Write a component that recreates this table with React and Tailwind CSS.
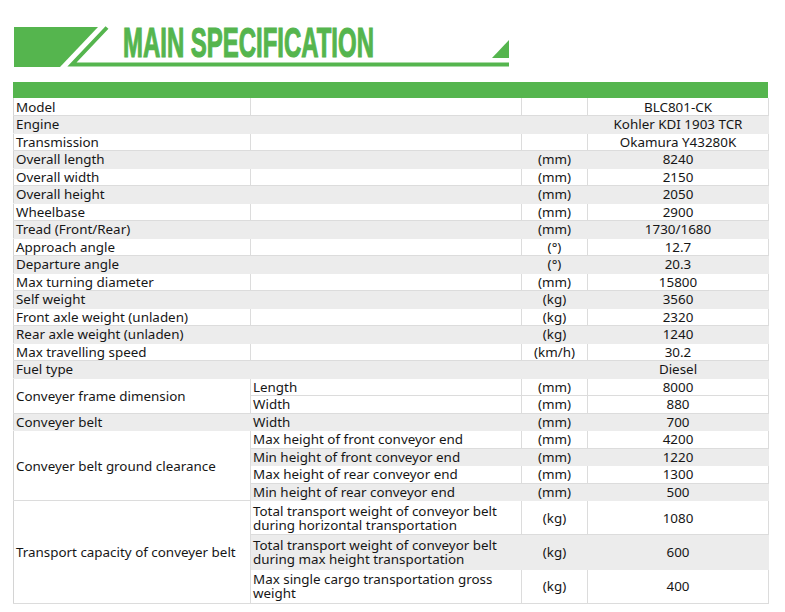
import React from "react";

const G = "#55b54e";

const simple = [
  ["Model", "", "BLC801-CK"],
  ["Engine", "", "Kohler KDI 1903 TCR"],
  ["Transmission", "", "Okamura Y43280K"],
  ["Overall length", "(mm)", "8240"],
  ["Overall width", "(mm)", "2150"],
  ["Overall height", "(mm)", "2050"],
  ["Wheelbase", "(mm)", "2900"],
  ["Tread (Front/Rear)", "(mm)", "1730/1680"],
  ["Approach angle", "(°)", "12.7"],
  ["Departure angle", "(°)", "20.3"],
  ["Max turning diameter", "(mm)", "15800"],
  ["Self weight", "(kg)", "3560"],
  ["Front axle weight (unladen)", "(kg)", "2320"],
  ["Rear axle weight (unladen)", "(kg)", "1240"],
  ["Max travelling speed", "(km/h)", "30.2"],
  ["Fuel type", "", "Diesel"],
];

function rowCls(gray) {
  return gray ? "bg-[#ececec]" : "bg-white";
}
function cellCls(gray) {
  return gray
    ? "p-0 border-r border-b border-[#ececec]"
    : "p-0 border-r border-b border-[#dcdcdc]";
}

const H = "h-[17.5px]";

export default function App() {
  return (
    <div
      className="w-[785px] h-[612px] bg-white text-[#161616] overflow-hidden"
      style={{ fontFamily: '"Noto Sans", "Liberation Sans", sans-serif' }}
    >
      <div className="relative h-[82px]">
        <svg
          className="absolute inset-0"
          width="785"
          height="82"
          viewBox="0 0 785 82"
        >
          <polygon points="14,27 98,27 60,67 14,67" fill={G} />
          <polyline
            points="107,27.5 72,64.5 509,64.5"
            fill="none"
            stroke={G}
            strokeWidth="4"
            strokeLinejoin="miter"
          />
          <polygon points="492,58 509,40 509,58" fill={G} />
        </svg>
        <div className="relative pl-[123px] pt-[22px]">
          <div
            className="inline-block origin-left scale-x-[0.57] text-[42px] leading-[42px] font-bold whitespace-nowrap text-[#55b54e] [-webkit-text-stroke:1.2px_#55b54e]"
            style={{ fontFamily: '"Liberation Sans", sans-serif' }}
          >
            MAIN SPECIFICATION
          </div>
        </div>
      </div>

      <div className="ml-[13px] w-[755px]">
        <div className="h-4 bg-[#55b54e]" />
        <table className="w-[755px] table-fixed border-collapse text-[13.4px] leading-[16px] border-l border-r border-b border-[#d4d4d4]">
          <colgroup>
            <col className="w-[237px]" />
            <col className="w-[271px]" />
            <col className="w-[66px]" />
            <col className="w-[181px]" />
          </colgroup>
          <tbody>
            {simple.map(([l, u, v], i) => {
              const gray = i % 2 === 1;
              const c = cellCls(gray);
              return (
                <tr key={i} className={`${rowCls(gray)} ${H}`}>
                  <td className={`${c} pl-[2px] whitespace-nowrap`}>{l}</td>
                  <td className={c}></td>
                  <td className={`${c} text-center`}>{u}</td>
                  <td className={`${c} text-center`}>{v}</td>
                </tr>
              );
            })}
            <tr className={`bg-white ${H}`}>
              <td rowSpan={2} className={`${cellCls(false)} pl-[2px] bg-white`}>
                Conveyer frame dimension
              </td>
              <td className={`${cellCls(false)} pl-[2px]`}>Length</td>
              <td className={`${cellCls(false)} text-center`}>(mm)</td>
              <td className={`${cellCls(false)} text-center`}>8000</td>
            </tr>
            <tr className={`bg-white ${H}`}>
              <td className={`${cellCls(false)} pl-[2px]`}>Width</td>
              <td className={`${cellCls(false)} text-center`}>(mm)</td>
              <td className={`${cellCls(false)} text-center`}>880</td>
            </tr>
            <tr className={`bg-[#ececec] ${H}`}>
              <td className={`${cellCls(true)} pl-[2px]`}>Conveyer belt</td>
              <td className={`${cellCls(true)} pl-[2px]`}>Width</td>
              <td className={`${cellCls(true)} text-center`}>(mm)</td>
              <td className={`${cellCls(true)} text-center`}>700</td>
            </tr>
            {[
              ["Max height of front conveyor end", "4200"],
              ["Min height of front conveyor end", "1220"],
              ["Max height of rear conveyor end", "1300"],
              ["Min height of rear conveyor end", "500"],
            ].map(([s, v], i) => {
              const gray = i % 2 === 1;
              const c = cellCls(gray);
              return (
                <tr key={s} className={`${rowCls(gray)} ${H}`}>
                  {i === 0 && (
                    <td
                      rowSpan={4}
                      className={`${cellCls(false)} pl-[2px] bg-white`}
                    >
                      Conveyer belt ground clearance
                    </td>
                  )}
                  <td className={`${c} pl-[2px] whitespace-nowrap`}>{s}</td>
                  <td className={`${c} text-center`}>(mm)</td>
                  <td className={`${c} text-center`}>{v}</td>
                </tr>
              );
            })}
            {[
              [
                "Total transport weight of conveyor belt",
                "during horizontal transportation",
                "1080",
              ],
              [
                "Total transport weight of conveyor belt",
                "during max height transportation",
                "600",
              ],
              ["Max single cargo transportation gross", "weight", "400"],
            ].map(([a, b, v], i) => {
              const gray = i % 2 === 1;
              const c = cellCls(gray);
              return (
                <tr key={v} className={`${rowCls(gray)} h-[34.3px]`}>
                  {i === 0 && (
                    <td
                      rowSpan={3}
                      className={`${cellCls(false)} pl-[2px] bg-white`}
                    >
                      Transport capacity of conveyer belt
                    </td>
                  )}
                  <td className={`${c} pl-[2px] leading-[14px] whitespace-nowrap`}>
                    {a}
                    <br />
                    {b}
                  </td>
                  <td className={`${c} text-center`}>(kg)</td>
                  <td className={`${c} text-center`}>{v}</td>
                </tr>
              );
            })}
          </tbody>
        </table>
      </div>
    </div>
  );
}
